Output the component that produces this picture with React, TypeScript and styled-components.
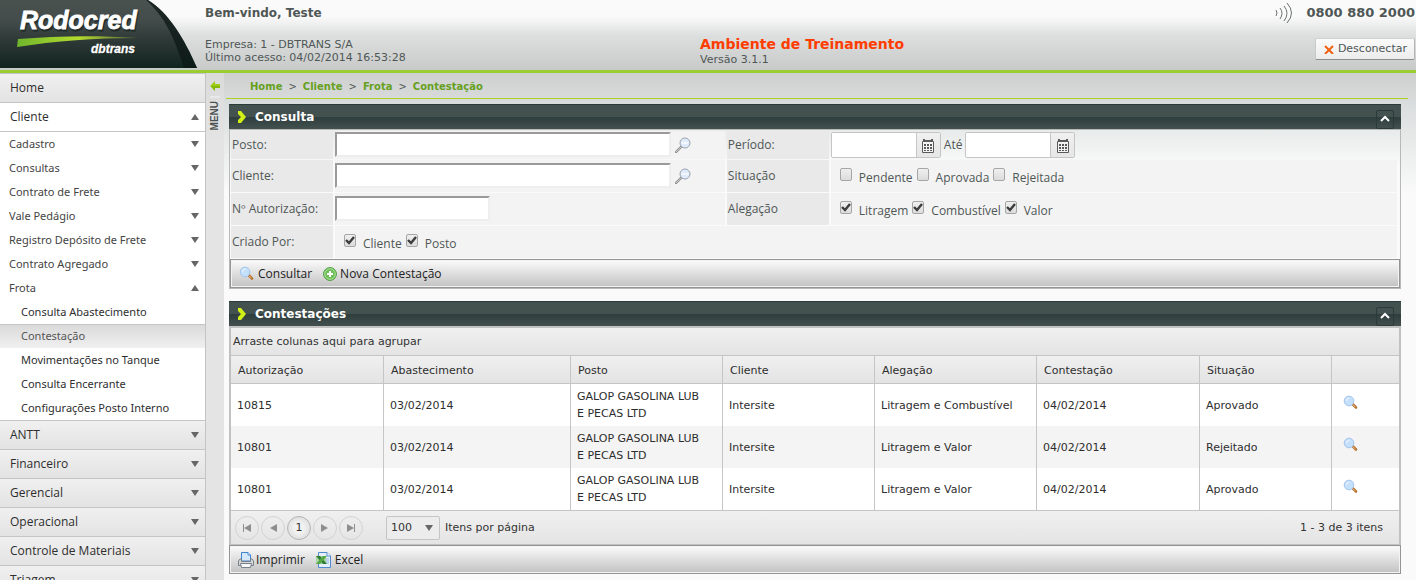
import React, { useState } from "react";
import styled, { createGlobalStyle, css } from "styled-components";

const wide = `Verdana, "DejaVu Sans", sans-serif`;
const narrow = `"Open Sans", "Noto Sans", sans-serif`;

const GlobalStyle = createGlobalStyle`
  *, *::before, *::after { box-sizing: border-box; }
  body { margin: 0; background: #fafafa; color: #4f5756; font-family: ${narrow}; font-size: 12px; }
  button { font: inherit; color: inherit; cursor: pointer; }
  a { color: inherit; text-decoration: none; }
`;

const Page = styled.div`
  display: flex;
  flex-direction: column;
  height: 100vh;
  overflow: hidden;
`;

/* Header */

const Header = styled.header`
  display: grid;
  grid-template-columns: 205px minmax(0, 495fr) minmax(0, 716fr);
  flex: none;
  height: 73px;
  border-bottom: 3px solid #9acd32;
  background: linear-gradient(#fafafa 0, #fafafa 16px, #dcdfde 36px, #c8cac9 70px);
  font-family: ${wide};
  font-size: 11px;
  line-height: 13px;
`;

const LogoArt = styled.svg`
  display: block;
  width: 200px;
  height: 70px;
`;

const UserInfo = styled.div`
  padding-top: 6px;
`;

const Welcome = styled.strong`
  display: block;
  margin-bottom: 18px;
  font-size: 12px;
  line-height: 14px;
`;

const HeaderEnd = styled.div`
  display: flex;
  justify-content: space-between;
`;

const Environment = styled.div`
  padding-top: 36px;
`;

const EnvironmentName = styled.strong`
  display: block;
  color: #ff3c00;
  font-size: 14px;
  line-height: 17px;
`;

const Contact = styled.div`
  display: flex;
  flex-direction: column;
  align-items: flex-end;
  gap: 14px;
  padding: 2px 1px 0 0;
`;

const Phone = styled.strong`
  display: flex;
  align-items: center;
  gap: 13px;
  font-size: 13px;
  line-height: 22px;
`;

const LogoutButton = styled.button`
  display: flex;
  align-items: center;
  gap: 4px;
  height: 22px;
  padding: 0 7px 0 8px;
  border: 1px solid #b9b9b9;
  border-color: #d2d2d2 #b4b4b4 #8c8c8c #c8c8c8;
  border-radius: 2px;
  background: linear-gradient(#fbfbfb, #ececec);
  line-height: 16px;
`;

/* Side menu */

const Body = styled.div`
  display: flex;
  flex: 1;
  min-height: 0;
  background: linear-gradient(#cecfcf 0, #dcdfdf 35px, #fafafa 120px);
`;

const SideMenu = styled.nav`
  flex: none;
  width: 206px;
  overflow: hidden;
  border-top: 1px solid #c4c4c4;
  border-right: 1px solid #c4c4c4;
  background: #fff;
  color: #2e2e2e;
`;

const MenuList = styled.ul`
  margin: 0;
  padding: 0;
  list-style: none;
`;

type Level = "top" | "group" | "leaf";

const MenuButton = styled.button<{ $level: Level; $on?: boolean }>`
  display: flex;
  align-items: center;
  justify-content: space-between;
  width: 100%;
  height: 24px;
  padding: 0 6px 0 9px;
  border: 0;
  background: #fff;
  color: #444;
  font-family: "Noto Sans", sans-serif;
  font-size: 11px;
  text-align: left;
  ${(p) =>
    p.$level === "top" &&
    css`
      height: 29px;
      padding-left: 10px;
      border-bottom: 1px solid #c5c5c5;
      background: ${p.$on ? "#fff" : "linear-gradient(#f0f0f0, #e3e3e3)"};
      color: #2e2e2e;
      font-family: ${narrow};
      font-size: 12px;
    `}
  ${(p) =>
    p.$level === "leaf" &&
    css`
      padding-left: 21px;
      color: #2e2e2e;
    `}
  ${(p) =>
    p.$level === "leaf" &&
    p.$on &&
    css`
      border-top: 1px solid #c5c5c5;
      background: linear-gradient(#dadada, #f0f0f0);
      color: #555;
    `}
`;

const MenuText = styled.span`
  padding-bottom: 2px;
`;

const LastGroup = styled.li`
  border-bottom: 1px solid #c5c5c5;
`;

const Collapser = styled.button`
  display: flex;
  flex-direction: column;
  align-items: center;
  flex: none;
  width: 18px;
  padding: 8px 0 0;
  border: 0;
  background: linear-gradient(#dadada, #e4e4e4 70px);
`;

const CollapserLabel = styled.span`
  margin-top: 5px;
  padding-bottom: 4px;
  border-bottom: 1px solid #f5f5f5;
  color: #4b5352;
  font-family: "Liberation Sans", Arial, sans-serif;
  font-size: 10px;
  font-weight: bold;
  line-height: 10px;
  writing-mode: vertical-rl;
  transform: rotate(180deg);
`;

/* Content */

const Content = styled.main`
  flex: 1;
  min-width: 0;
  padding: 0 8px 0 2px;
`;

const Breadcrumb = styled.nav`
  height: 26px;
  padding: 7px 0 0 24px;
  border-bottom: 1px solid #a9d426;
  color: #4f5756;
  font-family: ${wide};
  font-size: 11px;
  line-height: 14px;
`;

const Crumb = styled.a`
  color: #66a01e;
  font-size: 10px;
  font-weight: bold;
`;

const CrumbMark = styled.span`
  margin: 0 6px;
  font-size: 10px;
`;

const Panel = styled.section<{ $first?: boolean }>`
  margin: ${(p) => (p.$first ? "5px" : "12px")} 7px 0 3px;
`;

const PanelHeader = styled.header`
  display: flex;
  align-items: center;
  height: 25px;
  padding: 0 7px 0 8px;
  border-top: 1px solid #2a3b39;
  background: linear-gradient(#43524f 0, #43524f 12px, #2e3e3c 12px, #43504f 24px);
`;

const PanelTitle = styled.h2`
  flex: 1;
  margin: 0 0 0 8px;
  color: #fff;
  font-family: ${wide};
  font-size: 12px;
  line-height: 16px;
`;

const PanelToggle = styled.button`
  display: flex;
  align-items: center;
  justify-content: center;
  align-self: flex-end;
  width: 18px;
  height: 19px;
  padding: 0 0 2px;
  border: 1px solid #2a3b39;
  border-radius: 2px;
  background: transparent;
`;

const PanelBody = styled.div`
  border: 1px solid #b8b8b8;
`;

const FormGrid = styled.div`
  display: grid;
  grid-template-columns: 102px minmax(0, 393fr) 102px minmax(0, 569fr);
  grid-template-rows: 28px 32px 32px 32px;
  gap: 1px 0;
  padding: 1px;
  background: linear-gradient(#e7ebea, #fafafa 36px);
`;

const Caption = styled.div`
  display: flex;
  align-items: center;
  padding: 0 0 2px 1px;
  background: #e9e9e9;
`;

const Cell = styled.div<{ $fill?: boolean; $span?: boolean }>`
  display: flex;
  align-items: center;
  margin: 0 2px;
  padding-bottom: 1px;
  grid-column: ${(p) => (p.$span ? "span 3" : "auto")};
  background: ${(p) => (p.$fill ? "#f3f3f3" : "transparent")};
`;

const TextInput = styled.input<{ $short?: boolean }>`
  width: ${(p) => (p.$short ? "155px" : "336px")};
  height: 25px;
  padding: 1px 4px;
  border: 2px solid;
  border-color: #9a9a9a #eee #eee #9a9a9a;
  background: #fff;
  font: inherit;
`;

const IconButton = styled.button`
  display: flex;
  margin-left: 4px;
  padding: 0;
  border: 0;
  background: none;
`;

const DateBox = styled.span`
  display: flex;
  width: 110px;
  height: 26px;
  border: 1px solid #c5c5c5;
  border-radius: 2px;
  background: #fff;
`;

const DateInput = styled.input`
  flex: 1;
  width: 0;
  padding: 0 4px;
  border: 0;
  border-radius: 2px;
  background: #fff;
  font: inherit;
`;

const DateButton = styled.button`
  display: flex;
  align-items: center;
  justify-content: center;
  width: 24px;
  padding: 2px 0 0;
  border: 0;
  border-left: 1px solid #c5c5c5;
  background: linear-gradient(#f0f0f0, #e6e6e6);
`;

const Until = styled.span`
  margin: 0 3px;
`;

const Checks = styled.div`
  display: flex;
  gap: 4px;
  padding: 2px 0 0 9px;
`;

const CheckLabel = styled.label`
  display: flex;
  gap: 6px;
  line-height: 16px;
`;

const CheckText = styled.span`
  padding-top: 2px;
`;

const CheckBox = styled.span`
  position: relative;
  display: block;
  width: 13px;
  height: 16px;

  input {
    appearance: none;
    display: block;
    width: 12px;
    height: 13px;
    margin: 0;
    border: 1px solid #a6a6a6;
    border-radius: 2px;
    background: linear-gradient(#efefef, #dcdcdc);
  }

  svg {
    position: absolute;
    left: 1px;
    top: 1px;
    pointer-events: none;
    opacity: 0;
  }

  input:checked + svg {
    opacity: 1;
  }
`;

const ActionBar = styled.div`
  display: flex;
  align-items: center;
  gap: 11px;
  height: 29px;
  padding: 0 8px;
  border: 1px solid #949494;
  background: linear-gradient(#fbfbfb, #c2c2c2);
  box-shadow: inset 0 0 0 1px #f3f3f3;
  color: #222;
`;

const ActionButton = styled.button<{ $tight?: boolean }>`
  display: flex;
  align-items: center;
  gap: ${(p) => (p.$tight ? "2px" : "3px")};
  padding: 0;
  border: 0;
  background: none;
  line-height: 16px;
`;

/* Result grid */

const GroupHint = styled.div`
  height: 28px;
  padding: 0 2px;
  border-bottom: 1px solid #c5c5c5;
  background: linear-gradient(#f0f0f0, #e4e4e4);
  color: #333;
  font-family: ${wide};
  font-size: 11px;
  line-height: 27px;
`;

const ResultBody = styled(PanelBody)`
  border: 2px solid #c1c1c1;
  border-bottom-width: 1px;
`;

const Results = styled.table`
  width: 100%;
  table-layout: fixed;
  border-collapse: separate;
  border-spacing: 0;
  background: #fff;
  color: #2e2e2e;
  font-family: ${wide};
  font-size: 11px;
  line-height: 17px;

  th,
  td {
    text-align: left;
    border-left: 1px solid #c5c5c5;
  }

  th:first-child,
  td:first-child {
    border-left: 0;
  }

  th {
    height: 28px;
    padding: 2px 7px 0;
    border-bottom: 1px solid #c5c5c5;
    background: linear-gradient(#f0f0f0, #e3e3e3);
    font-weight: normal;
  }

  td {
    height: 42px;
    padding: 0 15px 0 6px;
  }

  tbody tr:nth-child(even) {
    background: #f4f4f4;
  }

  td:last-child {
    padding: 0 0 4px 7px;
  }
`;

const Pager = styled.div`
  display: flex;
  align-items: center;
  height: 34px;
  padding: 0 16px 0 4px;
  border-top: 1px solid #c5c5c5;
  background: linear-gradient(#f0f0f0, #e4e4e4);
  color: #333;
  font-family: ${wide};
  font-size: 11px;
`;

const PageButton = styled.button<{ $current?: boolean }>`
  display: flex;
  align-items: center;
  justify-content: center;
  width: 24px;
  height: 24px;
  margin-right: 2px;
  padding: 0;
  border: 1px solid ${(p) => (p.$current ? "#b4b4b4" : "#d2d2d2")};
  border-radius: 50%;
  background: ${(p) => (p.$current ? "radial-gradient(#f2f2f2 30%, #d4d4d4)" : "transparent")};
`;

const SizeField = styled.label`
  display: flex;
  align-items: center;
  gap: 5px;
  flex: 1;
  margin-left: 21px;
`;

const SizeBox = styled.span`
  position: relative;
  display: flex;

  svg {
    position: absolute;
    right: 7px;
    top: 9px;
    pointer-events: none;
  }
`;

const SizeSelect = styled.select`
  appearance: none;
  width: 54px;
  height: 24px;
  padding: 0 4px;
  border: 1px solid #c5c5c5;
  border-radius: 2px;
  background: #ececec;
  color: inherit;
  font: inherit;
`;

/* Drawings */

const Logo = () => (
  <LogoArt viewBox="0 0 200 70" role="img" aria-label="Rodocred dbtrans">
    <defs>
      <linearGradient id="dark" x1="0" y1="0" x2="0" y2="1">
        <stop offset="0" stopColor="#4a5250" />
        <stop offset=".3" stopColor="#434c4a" />
        <stop offset=".65" stopColor="#2a3633" />
        <stop offset="1" stopColor="#10241e" />
      </linearGradient>
      <linearGradient id="swoosh" x1="0" y1="0" x2="1" y2="0">
        <stop offset="0" stopColor="#6fb52c" />
        <stop offset=".5" stopColor="#b4dc2e" />
        <stop offset="1" stopColor="#4a5a3c" />
      </linearGradient>
    </defs>
    <path d="M0 0H148C168 12 184 38 197 68H0Z" fill="url(#dark)" />
    <path d="M146 0H148C168 12 184 38 197 68H184C174 36 164 16 146 0Z" fill="#0c1815" opacity=".75" />
    <g fontFamily="'Liberation Sans', Arial, sans-serif" fontWeight="bold" fontStyle="italic">
      <text x="21" y="31" fontSize="25" fill="#0a1512" stroke="#0a1512" opacity=".5">Rodocred</text>
      <text x="20" y="29" fontSize="25" fill="#fff" stroke="#fff" strokeWidth=".8">Rodocred</text>
      <text x="92" y="54" fontSize="12" fill="#0a1512" opacity=".5">dbtrans</text>
      <text x="91" y="53" fontSize="12" fill="#fff" stroke="#fff" strokeWidth=".3">dbtrans</text>
    </g>
    <path d="M18 39C55 36 95 35 139 38C95 38 55 41 17 47Z" fill="url(#swoosh)" />
  </LogoArt>
);

const Waves = () => (
  <svg width="18" height="22" viewBox="0 0 18 22" fill="none" stroke="#6b7371" aria-hidden="true">
    <path d="M1 8Q3 11 1 14M5 6Q9 11 5 17M9 4Q15 11 9 19M12 1Q21 11 12 21" />
  </svg>
);

const Cross = () => (
  <svg width="10" height="10" viewBox="0 0 10 10" stroke="#f0600f" strokeWidth="2" aria-hidden="true">
    <path d="M1 2L9 10M9 2L1 10" />
  </svg>
);

const Triangle = ({ up }: { up?: boolean }) => (
  <svg width="8" height="6" viewBox="0 0 8 6" fill="#666" aria-hidden="true">
    <path d={up ? "M0 6H8L4 0Z" : "M0 0H8L4 6Z"} />
  </svg>
);

const BackArrow = () => (
  <svg width="10" height="10" viewBox="0 0 10 10" aria-hidden="true">
    <path d="M0 5L5 0V3H10V7H5V10Z" fill="#9acd14" />
    <path d="M1 5H10V7H5V10Z" fill="#86b80c" />
  </svg>
);

const Marker = () => (
  <svg width="10" height="12" viewBox="0 0 10 12" aria-hidden="true">
    <path d="M1 0H4L9 6L4 12H1V9L4 6L1 3Z" fill="#d0f016" />
  </svg>
);

const Chevron = () => (
  <svg width="10" height="7" viewBox="0 0 10 7" fill="none" stroke="#fff" strokeWidth="2" aria-hidden="true">
    <path d="M1 6L5 2L9 6" />
  </svg>
);

const Tick = () => (
  <svg width="11" height="11" viewBox="0 0 11 11" fill="none" stroke="#3c3c3c" strokeWidth="2.4" aria-hidden="true">
    <path d="M1 5L4 8L9 2" />
  </svg>
);

const LookupIcon = () => (
  <svg width="16" height="16" viewBox="0 0 16 16" aria-hidden="true">
    <path d="M1 15L6 10" stroke="#8d8d8d" strokeWidth="2.4" strokeLinecap="round" />
    <path d="M1 15L6 10" stroke="#d8d8d8" strokeWidth=".8" />
    <circle cx="10" cy="6" r="5" fill="#dfeafa" stroke="#9aa3ae" />
    <path d="M6.5 6H13.5" stroke="#f8fbff" strokeWidth="1.5" />
  </svg>
);

const SearchIcon = () => (
  <svg width="16" height="16" viewBox="0 0 16 16" aria-hidden="true">
    <path d="M10 9.500L13 12.500" stroke="#b5712f" strokeWidth="2.600" strokeLinecap="round" />
    <path d="M9.500 9.500L12.500 12" stroke="#e9b678" strokeWidth="1" />
    <circle cx="6" cy="6" r="4.800" fill="#c5e0fb" stroke="#a3c4ee" />
    <path d="M3.500 6A3 3 0 0 1 6.500 3" stroke="#eef7ff" fill="none" />
  </svg>
);

const AddIcon = () => (
  <svg width="14" height="14" viewBox="0 0 14 14" aria-hidden="true">
    <circle cx="7" cy="7" r="6.400" fill="#6cc055" stroke="#4a9c3c" />
    <circle cx="7" cy="7" r="5.300" fill="none" stroke="#c3e8b5" strokeWidth=".8" />
    <path d="M7 4V10M4 7H10" stroke="#fff" strokeWidth="2" />
  </svg>
);

const CalendarIcon = () => (
  <svg width="12" height="14" viewBox="0 0 12 14" aria-hidden="true">
    <path d="M.5 2.500H11.500V13.500H.5Z" fill="#f4f4f4" stroke="#5a5a5a" />
    <path d="M1 0H3V1H9V0H11V2H1Z" fill="#5a5a5a" />
    <path d="M2 5h2v2h-2zM5 5h2v2h-2zM8 5h2v2h-2zM2 8h2v2h-2zM5 8h2v2h-2zM8 8h2v2h-2zM2 11h2v1h-2zM5 11h2v1h-2zM8 11h2v1h-2z" fill="#5a5a5a" />
  </svg>
);

const PrinterIcon = () => (
  <svg width="16" height="16" viewBox="0 0 16 16" aria-hidden="true">
    <path d="M3.500 9V.5H10L12.500 3V9Z" fill="#d5e8fb" stroke="#3f82cf" />
    <path d="M10 .5V3H12.500" fill="#fff" stroke="#3f82cf" />
    <path d="M3.500 7H2L.5 9V13.500H15.500V9L14 7H12.500V9.500H3.500Z" fill="#d3d7da" stroke="#7a8187" />
    <path d="M2.500 11.500H13.500L12.500 15.500H3.500Z" fill="#f6f9fc" stroke="#7a8187" />
  </svg>
);

const ExcelIcon = () => (
  <svg width="16" height="16" viewBox="0 0 16 16" aria-hidden="true">
    <path d="M2.500 .5H11L14.500 4V15.500H2.500Z" fill="#e4effa" stroke="#4d8ad0" />
    <path d="M11 .5V4H14.500" fill="#fff" stroke="#4d8ad0" />
    <path d="M9 7H13M9 9H13M9 11H13" stroke="#8fb5de" />
    <path d="M0 4H10V12H0Z" fill="#a9d3a0" />
    <path d="M0 4H4L11 12H7Z" fill="#2f7d32" />
    <path d="M11 4H7L0 12H4Z" fill="#55a845" />
  </svg>
);

const PageArrow = ({ flip, end }: { flip?: boolean; end?: boolean }) => (
  <svg width="8" height="8" viewBox="0 0 8 8" fill="#8e8e8e" aria-hidden="true">
    <g transform={flip ? "matrix(-1 0 0 1 8 0)" : undefined}>
      <path d={end ? "M0 0H1V8H0ZM8 0V8L1 4Z" : "M8 0V8L1 4Z"} />
    </g>
  </svg>
);

/* Page */

type Entry = { text: string; level: Level; open?: boolean; mark?: boolean };

const menu: Entry[] = [
  { text: "Home", level: "top", mark: false },
  { text: "Cliente", level: "top", open: true, mark: true },
  { text: "Cadastro", level: "group", mark: true },
  { text: "Consultas", level: "group", mark: true },
  { text: "Contrato de Frete", level: "group", mark: true },
  { text: "Vale Pedágio", level: "group", mark: true },
  { text: "Registro Depósito de Frete", level: "group", mark: true },
  { text: "Contrato Agregado", level: "group", mark: true },
  { text: "Frota", level: "group", open: true, mark: true },
  { text: "Consulta Abastecimento", level: "leaf" },
  { text: "Contestação", level: "leaf", open: true },
  { text: "Movimentações no Tanque", level: "leaf" },
  { text: "Consulta Encerrante", level: "leaf" },
  { text: "Configurações Posto Interno", level: "leaf" },
  { text: "ANTT", level: "top", mark: true },
  { text: "Financeiro", level: "top", mark: true },
  { text: "Gerencial", level: "top", mark: true },
  { text: "Operacional", level: "top", mark: true },
  { text: "Controle de Materiais", level: "top", mark: true },
  { text: "Triagem", level: "top", mark: true },
];

const crumbs = ["Home", "Cliente", "Frota", "Contestação"];

const columns = [
  { title: "Autorização", width: 152 },
  { title: "Abastecimento", width: 187 },
  { title: "Posto", width: 152 },
  { title: "Cliente", width: 152 },
  { title: "Alegação", width: 162 },
  { title: "Contestação", width: 163 },
  { title: "Situação", width: 132 },
  { title: "", width: 68 },
];

const rows = [
  ["10815", "03/02/2014", "GALOP GASOLINA LUB E PECAS LTD", "Intersite", "Litragem e Combustível", "04/02/2014", "Aprovado"],
  ["10801", "03/02/2014", "GALOP GASOLINA LUB E PECAS LTD", "Intersite", "Litragem e Valor", "04/02/2014", "Rejeitado"],
  ["10801", "03/02/2014", "GALOP GASOLINA LUB E PECAS LTD", "Intersite", "Litragem e Valor", "04/02/2014", "Aprovado"],
];

const Check = ({ text, on }: { text: string; on?: boolean }) => (
  <CheckLabel>
    <CheckBox>
      <input type="checkbox" defaultChecked={on} />
      <Tick />
    </CheckBox>
    <CheckText>{text}</CheckText>
  </CheckLabel>
);

const DateField = ({ id, label }: { id: string; label: string }) => (
  <DateBox>
    <DateInput id={id} type="text" aria-label={label} />
    <DateButton type="button" aria-label="Abrir calendário">
      <CalendarIcon />
    </DateButton>
  </DateBox>
);

const PanelTop = ({ title, onToggle }: { title: string; onToggle: () => void }) => (
  <PanelHeader>
    <Marker />
    <PanelTitle>{title}</PanelTitle>
    <PanelToggle type="button" aria-label={`Recolher ${title}`} onClick={onToggle}>
      <Chevron />
    </PanelToggle>
  </PanelHeader>
);

export default function App() {
  const [showQuery, setShowQuery] = useState(true);
  const [showResults, setShowResults] = useState(true);

  return (
    <Page>
      <GlobalStyle />
      <Header>
        <Logo />
        <UserInfo>
          <Welcome>Bem-vindo, Teste</Welcome>
          <div>Empresa: 1 - DBTRANS S/A</div>
          <div>Último acesso: 04/02/2014 16:53:28</div>
        </UserInfo>
        <HeaderEnd>
          <Environment>
            <EnvironmentName>Ambiente de Treinamento</EnvironmentName>
            <div>Versão 3.1.1</div>
          </Environment>
          <Contact>
            <Phone>
              <Waves />
              0800 880 2000
            </Phone>
            <LogoutButton type="button">
              <Cross />
              Desconectar
            </LogoutButton>
          </Contact>
        </HeaderEnd>
      </Header>

      <Body>
        <SideMenu aria-label="Menu principal">
          <MenuList>
            {menu.map((m) => {
              const Item = m.text === "Configurações Posto Interno" ? LastGroup : "li";
              return (
                <Item key={m.text}>
                  <MenuButton type="button" $level={m.level} $on={m.open}>
                    <MenuText>{m.text}</MenuText>
                    {m.mark && <Triangle up={m.open} />}
                  </MenuButton>
                </Item>
              );
            })}
          </MenuList>
        </SideMenu>
        <Collapser type="button">
          <BackArrow />
          <CollapserLabel>MENU</CollapserLabel>
        </Collapser>

        <Content>
          <Breadcrumb aria-label="Caminho">
            {crumbs.map((c, i) => (
              <React.Fragment key={c}>
                {i > 0 && <CrumbMark>&gt;</CrumbMark>}
                <Crumb href="#">{c}</Crumb>
              </React.Fragment>
            ))}
          </Breadcrumb>

          <Panel $first>
            <PanelTop title="Consulta" onToggle={() => setShowQuery(!showQuery)} />
            {showQuery && (
              <PanelBody>
                <FormGrid>
                  <Caption as="label" htmlFor="posto">Posto:</Caption>
                  <Cell $fill>
                    <TextInput id="posto" type="text" />
                    <IconButton type="button" aria-label="Buscar posto"><LookupIcon /></IconButton>
                  </Cell>
                  <Caption as="label" htmlFor="de">Período:</Caption>
                  <Cell>
                    <DateField id="de" label="Período de" />
                    <Until>Até</Until>
                    <DateField id="ate" label="Até" />
                  </Cell>

                  <Caption as="label" htmlFor="cliente">Cliente:</Caption>
                  <Cell $fill>
                    <TextInput id="cliente" type="text" />
                    <IconButton type="button" aria-label="Buscar cliente"><LookupIcon /></IconButton>
                  </Cell>
                  <Caption>Situação</Caption>
                  <Cell $fill>
                    <Checks>
                      <Check text="Pendente" />
                      <Check text="Aprovada" />
                      <Check text="Rejeitada" />
                    </Checks>
                  </Cell>

                  <Caption as="label" htmlFor="numero">Nº Autorização:</Caption>
                  <Cell $fill>
                    <TextInput id="numero" type="text" $short />
                  </Cell>
                  <Caption>Alegação</Caption>
                  <Cell $fill>
                    <Checks>
                      <Check text="Litragem" on />
                      <Check text="Combustível" on />
                      <Check text="Valor" on />
                    </Checks>
                  </Cell>

                  <Caption>Criado Por:</Caption>
                  <Cell $fill $span>
                    <Checks>
                      <Check text="Cliente" on />
                      <Check text="Posto" on />
                    </Checks>
                  </Cell>
                </FormGrid>
                <ActionBar>
                  <ActionButton type="button"><SearchIcon />Consultar</ActionButton>
                  <ActionButton type="button"><AddIcon />Nova Contestação</ActionButton>
                </ActionBar>
              </PanelBody>
            )}
          </Panel>

          <Panel>
            <PanelTop title="Contestações" onToggle={() => setShowResults(!showResults)} />
            {showResults && (
              <>
                <ResultBody>
                  <GroupHint>Arraste colunas aqui para agrupar</GroupHint>
                  <Results>
                    <colgroup>
                      {columns.map((c) => (
                        <col key={c.title} width={c.width} />
                      ))}
                    </colgroup>
                    <thead>
                      <tr>
                        {columns.map((c) => (
                          <th key={c.title} scope="col">{c.title}</th>
                        ))}
                      </tr>
                    </thead>
                    <tbody>
                      {rows.map((r, i) => (
                        <tr key={i}>
                          {r.map((v, j) => (
                            <td key={j}>{v}</td>
                          ))}
                          <td>
                            <IconButton type="button" aria-label="Ver detalhes"><SearchIcon /></IconButton>
                          </td>
                        </tr>
                      ))}
                    </tbody>
                  </Results>
                  <Pager>
                    <PageButton type="button" aria-label="Primeira página"><PageArrow end /></PageButton>
                    <PageButton type="button" aria-label="Página anterior"><PageArrow /></PageButton>
                    <PageButton type="button" $current>1</PageButton>
                    <PageButton type="button" aria-label="Próxima página"><PageArrow flip /></PageButton>
                    <PageButton type="button" aria-label="Última página"><PageArrow flip end /></PageButton>
                    <SizeField>
                      <SizeBox>
                        <SizeSelect defaultValue="100">
                          <option>20</option>
                          <option>50</option>
                          <option>100</option>
                        </SizeSelect>
                        <Triangle />
                      </SizeBox>
                      Itens por página
                    </SizeField>
                    <span>1 - 3 de 3 itens</span>
                  </Pager>
                </ResultBody>
                <ActionBar>
                  <ActionButton type="button" $tight><PrinterIcon />Imprimir</ActionButton>
                  <ActionButton type="button"><ExcelIcon />Excel</ActionButton>
                </ActionBar>
              </>
            )}
          </Panel>
        </Content>
      </Body>
    </Page>
  );
}
